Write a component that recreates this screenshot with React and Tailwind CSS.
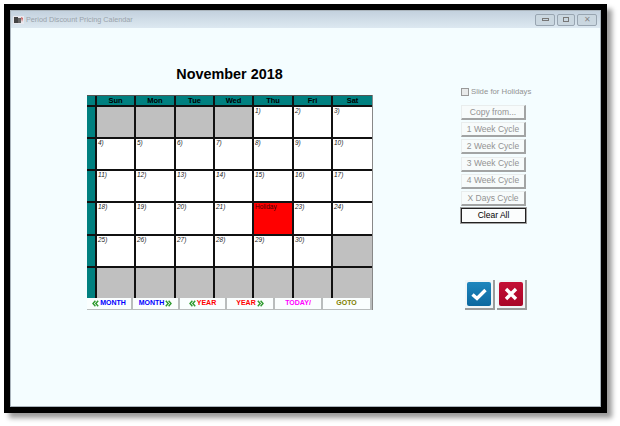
import React from "react";

const F = { fontFamily: '"Liberation Sans", Arial, sans-serif' };
const days = ["Sun", "Mon", "Tue", "Wed", "Thu", "Fri", "Sat"];
const colW = ["w-[39px]", "w-[40px]", "w-[39px]", "w-[39px]", "w-[40px]", "w-[39px]", "w-[39px]"];
const rowH = ["h-[32px]", "h-[32px]", "h-[32px]", "h-[33px]", "h-[32px]", "h-[32px]"];
const weeks = [
  [null, null, null, null, "1)", "2)", "3)"],
  ["4)", "5)", "6)", "7)", "8)", "9)", "10)"],
  ["11)", "12)", "13)", "14)", "15)", "16)", "17)"],
  ["18)", "19)", "20)", "21)", "H", "23)", "24)"],
  ["25)", "26)", "27)", "28)", "29)", "30)", null],
  [null, null, null, null, null, null, null],
];

function Chev({ color, flip }) {
  return (
    <svg width="7" height="7" viewBox="0 0 7 7" className={flip ? "rotate-180" : ""}>
      <path d="M3.4 .8 1 3.5l2.4 2.7M6.2 .8 3.8 3.5l2.4 2.7" fill="none" stroke={color} strokeWidth="1.4" />
    </svg>
  );
}

function Nav({ children, w }) {
  return (
    <div className={`${w} h-[12px] flex items-center justify-center gap-[1px] text-[7px] font-bold border-r-2 border-b border-[#b9bdbd] bg-[#fafefe]`}>
      {children}
    </div>
  );
}

function Btn({ children, dark }) {
  return (
    <div
      className={
        dark
          ? "w-[65px] h-[15px] flex items-center justify-center text-[8.5px] text-black border border-[#222] outline outline-1 outline-[#a0a0a0] bg-[#fbfdfd] shadow-[1px_1px_0_#777]"
          : "w-[65px] h-[15px] mb-[2.2px] flex items-center justify-center text-[8.5px] text-[#929292] bg-[#f7fbfb] border-r-2 border-b-2 border-[#a2a4a4] border-t border-l border-t-[#e9eded] border-l-[#e9eded]"
      }
    >
      {children}
    </div>
  );
}

export default function App() {
  return (
    <div style={F} className="w-[620px] h-[426px] bg-white overflow-hidden pl-[4px] pt-[4px]">
      <div className="w-[603px] h-[409px] bg-black p-[6px] shadow-[5px_5px_5px_#9a9a9a]">
        <div className="w-[591px] h-[397px] bg-[#f4fdff] border border-[#aab4bc] flex flex-col">
          <div className="h-[17px] shrink-0 flex items-center pl-[2px] pr-[3px] bg-gradient-to-b from-[#c3d1de] to-[#dde9f1]">
            <svg width="11" height="10" viewBox="0 0 11 10" className="shrink-0">
              <rect x="0" y="1" width="11" height="8" fill="#e8e8ee" />
              <rect x="1" y="2" width="4" height="6" fill="#444" />
              <rect x="5" y="3" width="3" height="5" fill="#666" />
              <path d="M8 2l2 1-1 4z" fill="#c55" />
            </svg>
            <span className="ml-[2px] text-[7.25px] text-[#9aa3ab] leading-none">Period Discount Pricing Calendar</span>
            <div className="ml-auto flex gap-[2px]">
              <div className="w-[20px] h-[12px] border border-[#98a5b1] rounded-[2px] bg-[#cad7e0] flex items-center justify-center">
                <div className="w-[7px] h-[3px] border border-[#777]" />
              </div>
              <div className="w-[18px] h-[12px] border border-[#98a5b1] rounded-[2px] bg-[#cad7e0] flex items-center justify-center">
                <div className="w-[6px] h-[5px] border border-[#777]" />
              </div>
              <div className="w-[20px] h-[12px] border border-[#98a5b1] rounded-[2px] bg-[#cad7e0] flex items-center justify-center text-[8px] leading-none text-[#888]">
                ✕
              </div>
            </div>
          </div>

          <div className="flex">
            <div className="ml-[76px] w-[285px] shrink-0">
              <div className="mt-[38px] h-[29px] text-center text-[14.4px] font-bold text-black leading-[17px]">November 2018</div>
              <div className="border-r border-[#888] w-[286px]">
                <div className="flex h-[10px] bg-[#008080] border-t border-[#555]">
                  <div className="w-[10px] border-r-2 border-[#111]" />
                  {days.map((d, i) => (
                    <div key={d} className={`${colW[i]} ${i < 6 ? "border-r-2 border-[#111]" : ""} text-center text-[7.5px] font-bold text-black leading-[9px]`}>
                      {d}
                    </div>
                  ))}
                </div>
                {weeks.map((row, r) => (
                  <div key={r} className={`flex ${rowH[r]} border-t-2 border-[#111]`}>
                    <div className="w-[10px] bg-[#008080] border-r-2 border-[#111]" />
                    {row.map((c, i) => (
                      <div
                        key={i}
                        className={`${colW[i]} ${i < 6 ? "border-r-2 border-[#111]" : ""} text-[6.5px] leading-[8px] pl-[1px] italic text-[#222] ${
                          c === null ? "bg-[#c0c0c0]" : c === "H" ? "bg-[#ff0000]" : "bg-white"
                        }`}
                      >
                        {c === "H" ? <span className="not-italic text-[#400000]">Holiday</span> : c}
                      </div>
                    ))}
                  </div>
                ))}
                <div className="flex">
                  <Nav w="w-[46px]"><Chev color="#2e9a2e" /><span className="text-[#0000ff]">MONTH</span></Nav>
                  <Nav w="w-[47px]"><span className="text-[#0000ff]">MONTH</span><Chev color="#2e9a2e" flip /></Nav>
                  <Nav w="w-[47px]"><Chev color="#2e9a2e" /><span className="text-[#ff0000]">YEAR</span></Nav>
                  <Nav w="w-[48px]"><span className="text-[#ff0000]">YEAR</span><Chev color="#2e9a2e" flip /></Nav>
                  <Nav w="w-[48px]"><span className="text-[#ff00ff]">TODAY/</span></Nav>
                  <Nav w="w-[49px]"><span className="text-[#808000]">GOTO</span></Nav>
                </div>
              </div>
            </div>

            <div className="ml-[89px] w-[80px] shrink-0">
              <div className="mt-[58px] mb-[7px] h-[12px] flex items-center">
                <div className="w-[8px] h-[8px] border border-[#999] bg-[#e8eaea]" />
                <span className="ml-[2px] text-[7.75px] text-[#929292]">Slide for Holidays</span>
              </div>
              <Btn>Copy from...</Btn>
              <Btn>1 Week Cycle</Btn>
              <Btn>2 Week Cycle</Btn>
              <Btn>3 Week Cycle</Btn>
              <Btn>4 Week Cycle</Btn>
              <Btn>X Days Cycle</Btn>
              <Btn dark>Clear All</Btn>
              <div className="mt-[57px] ml-[4px] flex gap-[2px]">
                <div className="w-[30px] h-[30px] p-[2px] border-r-2 border-b-2 border-[#9a9c9c] bg-[#f0f6f8]">
                  <div className="w-full h-full rounded-[2px] bg-gradient-to-b from-[#1f86bd] to-[#0a689f] flex items-center justify-center">
                    <svg width="18" height="14" viewBox="0 0 18 14"><path d="M2.5 7.5 7 11.5 15.5 3" fill="none" stroke="#fff" strokeWidth="3.4" /></svg>
                  </div>
                </div>
                <div className="w-[30px] h-[30px] p-[2px] border-r-2 border-b-2 border-[#9a9c9c] bg-[#f0f6f8]">
                  <div className="w-full h-full rounded-[2px] bg-gradient-to-b from-[#c40f35] to-[#a80628] flex items-center justify-center">
                    <svg width="14" height="14" viewBox="0 0 14 14"><path d="M2 2 12 12M12 2 2 12" fill="none" stroke="#fff" strokeWidth="3.4" /></svg>
                  </div>
                </div>
              </div>
            </div>
          </div>
        </div>
      </div>
    </div>
  );
}
